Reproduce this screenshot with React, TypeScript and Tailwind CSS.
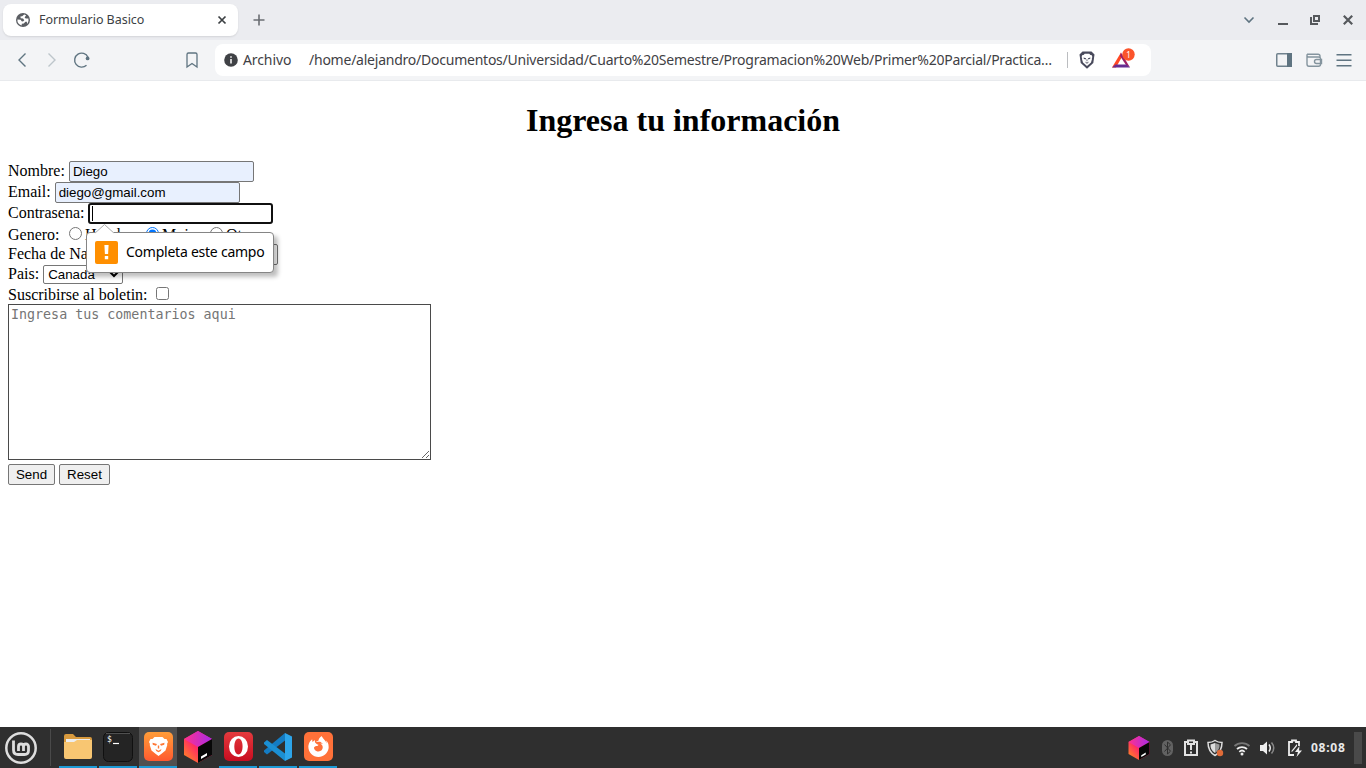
import type { ReactNode } from "react";
import { SiFirefoxbrowser } from "react-icons/si";

const ui = "font-['Noto_Sans',sans-serif]";
const field = "block border border-[#767676] rounded-[2px] px-[3px] py-px h-[21px] w-[185px] shrink-0 font-['Liberation_Sans',Arial,sans-serif] text-[13.333px] leading-[15px] text-black outline-none";

function Globe() {
  return (
    <svg width="14" height="14" viewBox="0 0 14 14" className="block">
      <circle cx="7" cy="7" r="7" fill="#5b5e63" />
      <path d="M8.2 1.5 6.2 3.2 4.4 3.4 4.7 5.2 7 5.6 8.3 7.2 7 8.4 5.6 8.2 4.7 6.8 1.4 6.6A5.6 5.6 0 0 0 5.6 12.4L5.8 10.8 7.8 10.5 9.4 8.8 10.8 8.8 11.2 11A5.7 5.7 0 0 0 12.4 5.6L9.8 5.5 8.6 4.4 10.1 2.3Z" fill="#fff" />
    </svg>
  );
}

function Lion({ ink }: { ink: string }) {
  return (
    <>
      <path d="M6.500 1H14.500L16.500 3 18.500 3 20 6 19 8 19.300 9 17.500 14.500 13.500 17.800 10.500 20 7.500 17.800 3.500 14.500 1.700 9 2 8 1 6 2.500 3 4.500 3Z" fill="#fff" />
      <path d="M4.500 6.800 9 8 8 9.700 4.800 8.800ZM16.500 6.800 12 8 13 9.700 16.200 8.800ZM7.500 13 10.500 14.800 13.500 13 12.700 15 10.500 16.300 8.300 15ZM9.800 9.500H11.200V12.500H9.800Z" fill={ink} />
    </>
  );
}

function TitleBar() {
  return (
    <div className="flex h-10 bg-[#ebecf0] pl-[3px] pt-1">
      <div className="flex h-8 w-[235px] items-center rounded-[8px] bg-white pl-[13px] pr-[11px] shadow-[0_1px_2px_rgba(0,0,0,0.1)]">
        <Globe />
        <span className="ml-[9px] flex-1 whitespace-nowrap text-[12.5px] tracking-[-0.04px] text-[#3c3f44]">Formulario Basico</span>
        <svg width="10" height="10" viewBox="0 0 10 10"><path d="M1.5 1.5 8.5 8.5M8.5 1.5 1.5 8.5" stroke="#3c4043" strokeWidth="1.7" /></svg>
      </div>
      <svg width="12" height="12" viewBox="0 0 12 12" className="ml-[15px] mt-[10px]"><path d="M6 .5V11.5M.5 6H11.5" stroke="#6b6e73" strokeWidth="1.6" /></svg>
      <svg width="126" height="32" viewBox="1240 4 126 32" className="ml-auto" fill="none">
        <path d="M1244.5 17.5 1249 22 1253.500 17.500" stroke="#5f7481" strokeWidth="1.6" />
        <path d="M1278 24H1288" stroke="#55585c" strokeWidth="2" />
        <path d="M1314 16H1319V21H1314ZM1311 17V24H1318" stroke="#55585c" strokeWidth="2" />
        <path d="M1343.800 15.800 1352.200 24.200M1352.200 15.800 1343.800 24.200" stroke="#55585c" strokeWidth="2.2" />
      </svg>
    </div>
  );
}

function Toolbar() {
  return (
    <div className="flex h-[41px] items-start border-b border-[#e8eaed] bg-[#f3f4f6]">
      <svg width="215" height="40" viewBox="0 40 215 40" fill="none" stroke="#5f7481" strokeWidth="1.4" className="shrink-0">
        <path d="M25.500 53.500 19 60 25.500 66.500" />
        <path d="M48.500 53.500 55 60 48.500 66.500" stroke="#bdc5cb" />
        <path d="M86.500 65.200A7 7 0 1 1 88 57.200" />
        <circle cx="87.600" cy="58.400" r="1.900" fill="#5f7481" stroke="none" />
        <path d="M187 67V54.500Q187 53 188.500 53H195.500Q197 53 197 54.500V67L192 63.500Z" strokeWidth="1.300" />
      </svg>
      <div className="mt-1 flex h-8 w-[936px] shrink-0 items-center rounded-[8px] bg-white text-[14px] text-[#3f4145]">
        <svg width="14" height="14" viewBox="0 0 14 14" className="ml-[9px] shrink-0"><circle cx="7" cy="7" r="6.800" fill="#404246" /><path d="M7 3.200V4.800M7 6V10.600" stroke="#fff" strokeWidth="1.500" /></svg>
        <span className="mb-[2px] ml-[5px] w-[66px] shrink-0 whitespace-nowrap tracking-[-0.1px]">Archivo</span>
        <span className="mb-[2px] w-[758px] shrink-0 whitespace-nowrap text-[14px] tracking-[-0.236px]">/home/alejandro/Documentos/Universidad/Cuarto%20Semestre/Programacion%20Web/Primer%20Parcial/Practica…</span>
        <span className="h-4 w-px bg-[#bbbdc0]" />
        <svg width="16" height="18" viewBox="0 0 16 18" className="ml-[11px]"><path d="M3.500.5H12.500L15.500 3.500 14.300 12 8 17.800 1.700 12 .5 3.500Z" fill="#494a5c" /><g transform="translate(2 2.200) scale(.57 .64)"><Lion ink="#494a5c" /></g></svg>
        <svg width="24" height="24" viewBox="0 0 24 24" className="mb-px ml-4"><path d="M10 4.500 1 19.500H5L10 10.500Z" fill="#ff4724" /><path d="M10 4.500 19 19.500 15 17 9 8Z" fill="#9e1f63" /><path d="M1 19.500 4.500 16.500H15.500L19 19.500Z" fill="#662d91" /><circle cx="17.500" cy="6.500" r="6.200" fill="#fb542b" /><text x="17.500" y="9.500" textAnchor="middle" fontSize="8" fill="#fff">1</text></svg>
      </div>
      <svg width="96" height="40" viewBox="1270 40 96 40" className="ml-auto" fill="none">
        <rect x="1276.750" y="53.750" width="14.500" height="12.500" rx="1" stroke="#70828e" strokeWidth="1.500" /><path d="M1287 53H1292V67H1287Z" fill="#5f7481" />
        <path d="M1307 54.200H1318Q1320 54.200 1320 56V57.500M1307 54.200V64Q1307 66.200 1309 66.200H1318.500Q1320.500 66.200 1320.500 64.500V58.200Q1320.500 57 1318.500 57H1308.500Q1307 57 1307 55.500M1321.500 59.500H1316.500A2 2 0 0 0 1316.500 63.500H1321.500Z" stroke="#84949e" strokeWidth="1.400" />
        <path d="M1336.500 54.800H1351.500M1336.500 60.300H1351.500M1336.500 65.700H1351.500" stroke="#5f7481" strokeWidth="1.400" />
      </svg>
    </div>
  );
}

function Validation() {
  return (
    <div className="absolute left-[86px] top-[151px] z-10 flex h-[41px] w-[188px] items-center rounded-[4px] border border-[#858585] bg-white pl-2 shadow-[4px_4px_4px_rgba(0,0,0,0.25)]">
      <svg width="19" height="10" viewBox="0 0 19 10" className="absolute left-2 top-[-9px]"><path d="M0 9 9.500.5 19 9V10H0Z" fill="#fff" /><path d="M.5 8.700 9.500.5 18.500 8.700" fill="none" stroke="#aaa" /></svg>
      <span className="flex h-[23px] w-[23px] items-center justify-center rounded-[2px] bg-[#ff8f00]">
        <svg width="5" height="15" viewBox="0 0 5 15"><path d="M.4 0H4.600L4.100 9H.9ZM.8 11H4.200V14.200H.8Z" fill="#fff" /></svg>
      </span>
      <span className={`${ui} mb-[2px] ml-2 whitespace-nowrap text-[14px] tracking-[-0.24px] text-black`}>Completa este campo</span>
    </div>
  );
}

function FormPage() {
  return (
    <main className="relative h-[646px] px-2 pt-[21px] font-['Liberation_Serif','Times_New_Roman',serif] text-[16px] leading-[18px] text-black">
      <h1 className="text-center text-[32px] font-bold leading-[37px]">Ingresa tu información</h1>
      <form className="mt-[22px]">
        <div className="flex h-[21px] gap-1"><label className="pt-px">Nombre:</label><input className={`${field} bg-[#e8f0fe]`} defaultValue="Diego" /></div>
        <div className="flex h-[21px] gap-1"><label className="pt-px">Email:</label><input className={`${field} bg-[#e8f0fe]`} defaultValue="diego@gmail.com" /></div>
        <div className="flex h-[21px] gap-1"><label className="pt-px">Contrasena:</label>
          <div className="flex h-[21px] w-[185px] items-center rounded-[3px] border-2 border-[#101010] bg-white pl-[2px]"><span className="h-[15px] w-px bg-black" /></div>
        </div>
        <div className="flex h-[20px] pt-[2px]"><span className="w-[61px]">Genero:</span>
          <input type="radio" name="genero" className="mt-px h-[13px] w-[13px]" /><label className="ml-[3px] w-[61px]">Hombre</label>
          <input type="radio" name="genero" defaultChecked className="mt-px h-[13px] w-[13px]" /><label className="ml-[3px] w-[48px]">Mujer</label>
          <input type="radio" name="genero" className="mt-px h-[13px] w-[13px]" /><label className="ml-[3px]">Otro</label>
        </div>
        <div className="flex h-[21px]"><label className="w-[151px] shrink-0 whitespace-nowrap pt-px">Fecha de Nacimiento:</label><div className="h-[21px] w-[119px] rounded-[2px] border border-[#767676]" /></div>
        <div className="flex h-[19px] gap-1"><label>Pais:</label>
          <select defaultValue="Canada" className="h-[19px] w-[80px] rounded-[2px] border border-[#767676] bg-white font-['Liberation_Sans',Arial,sans-serif] text-[13.333px] leading-[15px]"><option>Canada</option></select>
        </div>
        <div className="flex h-[20px] pt-[2px]"><label className="w-[148px]">Suscribirse al boletin:</label><input type="checkbox" className="mt-px h-[13px] w-[13px]" /></div>
        <textarea placeholder="Ingresa tus comentarios aqui" className="block h-[156px] w-[423px] border border-[#4a4a4a] p-[2px] font-['DejaVu_Sans_Mono',monospace] text-[13.333px] leading-[15px] outline-none placeholder:text-[#757575]" />
        <div className="mt-1 flex gap-1 font-['Liberation_Sans',Arial,sans-serif] text-[13.333px] leading-[15px]">
          <button type="button" className="h-[21px] w-[47px] rounded-[2px] border border-[#767676] bg-[#efefef]">Send</button>
          <button type="button" className="h-[21px] w-[51px] rounded-[2px] border border-[#767676] bg-[#efefef]">Reset</button>
        </div>
      </form>
      <Validation />
    </main>
  );
}

function Toolbox({ size }: { size: number }) {
  return (
    <svg width={size} height={size} viewBox="0 0 32 32">
      <defs>
        <linearGradient id="boxLeft" x1="0" y1="1" x2="1" y2="0"><stop stopColor="#ff9419" /><stop offset=".45" stopColor="#ff2d62" /><stop offset="1" stopColor="#ff1a8c" /></linearGradient>
        <linearGradient id="boxTop"><stop stopColor="#ff318c" /><stop offset="1" stopColor="#a82be8" /></linearGradient>
      </defs>
      <path d="M16 0 30 8V24L16 32 2 24V8Z" fill="url(#boxLeft)" /><path d="M16 0 30 8 16 16 2 8Z" fill="url(#boxTop)" /><path d="M16 16 30 8V24L16 32Z" fill="#080808" /><path d="M19 25.500 25 22V24.500L19 28Z" fill="#fff" />
    </svg>
  );
}

function Task({ children, running = true, active = false }: { children: ReactNode; running?: boolean; active?: boolean }) {
  return <div className={`flex h-[41px] w-[38px] items-center justify-center border-b-2 ${running ? "border-[#1c9ad6]" : "border-transparent"} ${active ? "bg-[#505050]" : ""}`}>{children}</div>;
}

function Taskbar() {
  return (
    <footer className="flex h-[41px] bg-[#2f2f2f]">
      <div className="flex w-[50px] items-center pl-[5px]">
        <svg width="32" height="32" viewBox="0 0 32 32" fill="none" stroke="#dedede"><circle cx="16" cy="16" r="14.700" strokeWidth="2.500" /><path d="M8.500 8.500V18Q8.500 22.500 13 22.500H19.500Q23.500 22.500 23.500 18.500V14.500A2.500 2.500 0 0 0 18.500 14.500V19M18.500 19V14.500A2.500 2.500 0 0 0 13.500 14.500V19" strokeWidth="2.800" /></svg>
      </div>
      <div className="mr-2 mt-[2px] h-[37px] w-px bg-[#4a4a4a]" />
      <div className="flex gap-[2px]">
        <Task><svg width="30" height="28" viewBox="0 0 30 28"><path d="M1 3Q1 1 3 1H10L13 4H27Q29 4 29 6V24H1Z" fill="#d89a3e" /><path d="M3 6H27V12H3Z" fill="#ededed" /><path d="M1 9H11L14 7H29V24Q29 26 27 26H3Q1 26 1 24Z" fill="#f8c672" /></svg></Task>
        <Task><svg width="30" height="30" viewBox="0 0 30 30"><rect x=".5" y=".5" width="29" height="29" rx="5" fill="#242424" stroke="#101010" /><path d="M3 1.500H27" stroke="#505050" /><text x="4" y="10" fontSize="8" fill="#fff" fontFamily="DejaVu Sans Mono">$</text><path d="M10 11.500H16" stroke="#fff" strokeWidth="1.200" /></svg></Task>
        <Task active><span className="flex h-[29px] w-[29px] items-center justify-center rounded-[5px] bg-gradient-to-b from-[#ff9c38] to-[#ff582f]"><svg width="21" height="21" viewBox="0 0 21 21"><Lion ink="#ff7734" /></svg></span></Task>
        <Task running={false}><Toolbox size={32} /></Task>
        <Task><svg width="29" height="29" viewBox="0 0 29 29"><defs><linearGradient id="operaRed" x2="0" y2="1"><stop stopColor="#e43a3d" /><stop offset="1" stopColor="#c90d20" /></linearGradient></defs><rect width="29" height="29" rx="5" fill="url(#operaRed)" /><path fillRule="evenodd" d="M14.500 4A9.500 10.500 0 1 0 14.500 25A9.500 10.500 0 1 0 14.500 4ZM14.500 6.500C20 6.500 20 22.500 14.500 22.500S9 6.500 14.500 6.500Z" fill="#fff" /></svg></Task>
        <Task><svg width="30" height="30" viewBox="0 0 30 30"><path d="M22 1 29 4.500V25.500L22 29Z" fill="#2da5ea" /><path d="M22 1V8.500L4 22.500 1 20V18.500Z" fill="#147cc3" /><path d="M22 29V21.500L4 8 1 10.500V12Z" fill="#1b8fd3" /></svg></Task>
        <Task><span className="flex h-[29px] w-[29px] items-center justify-center rounded-[5px] bg-[#ff7139]"><SiFirefoxbrowser size={21} color="#fff" /></span></Task>
      </div>
      <div className="ml-auto flex items-center">
        <Toolbox size={24} />
        <svg width="154" height="41" viewBox="1152 727 154 41" fill="none" className="ml-px shrink-0">
          <rect x="1162" y="740" width="11" height="16" rx="5.500" fill="#626262" /><path d="M1164.500 744.500 1170.500 751.200 1167.500 754V742L1170.500 744.800 1164.500 751.500" stroke="#2f2f2f" />
          <path d="M1188 742H1185V755H1197V742H1194M1188 744V740.500H1194V744Z" stroke="#e2e2e2" strokeWidth="2" /><path d="M1191 745V750M1191 751.500V753.500" stroke="#e2e2e2" strokeWidth="2" />
          <path d="M1215 740.500Q1218 742.500 1222 742.500 1222 751.500 1215 755.500 1208 751.500 1208 742.500 1212 742.500 1215 740.500Z" stroke="#ddd" strokeWidth="1.500" /><path d="M1215 743V753Q1210 750 1210.500 744.500Z" fill="#ddd" /><path d="M1215 743 1219.500 744.500Q1220 750 1215 753Z" fill="#999" /><circle cx="1220" cy="753" r="3.200" fill="#df6b38" />
          <path d="M1234.500 746A11 11 0 0 1 1249.500 746" stroke="#777" strokeWidth="1.800" /><path d="M1237 749A7.500 7.500 0 0 1 1247 749M1239.300 751.800A4 4 0 0 1 1244.700 751.800" stroke="#eee" strokeWidth="1.800" /><circle cx="1242" cy="754" r="1.500" fill="#eee" />
          <path d="M1260 745H1263L1267 741.500V754.500L1263 751H1260Z" fill="#eee" /><path d="M1269 744.500Q1271.500 748 1269 751.500" stroke="#eee" strokeWidth="1.500" /><path d="M1271.500 742.500Q1276 748 1271.500 753.500" stroke="#888" strokeWidth="1.500" />
          <path d="M1294 755H1289V742H1292V740.500H1296V742H1299V746" stroke="#eee" strokeWidth="1.800" /><path d="M1291 751.500 1297 744V746L1292.500 751.500Z" fill="#eee" /><path d="M1299.500 746 1295 752H1298L1296.500 757 1302 750.500H1299Z" fill="#eee" />
        </svg>
        <span className="ml-[5px] w-[43px] whitespace-nowrap text-[12px] font-bold tracking-[0.75px] text-[#e8e8e8]">08:08</span>
        <span className="mr-1 h-8 w-2 bg-[#4a4a4a]" />
      </div>
    </footer>
  );
}

export default function App() {
  return (
    <div className={`${ui} h-[768px] w-[1366px] overflow-hidden bg-white`}>
      <TitleBar />
      <Toolbar />
      <FormPage />
      <Taskbar />
    </div>
  );
}
